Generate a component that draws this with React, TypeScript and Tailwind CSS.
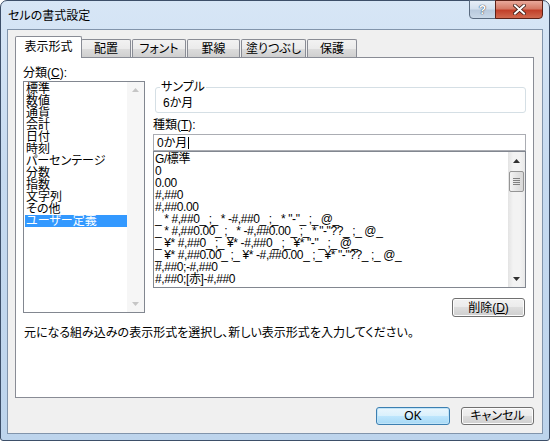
import React from "react";

const cats = [
  "標準",
  "数値",
  "通貨",
  "会計",
  "日付",
  "時刻",
  "パーセンテージ",
  "分数",
  "指数",
  "文字列",
  "その他",
  "ユーザー定義",
];

const formats = [
  "G/標準",
  "0",
  "0.00",
  "#,##0",
  "#,##0.00",
  '_ * #,##0_ ;_ * -#,##0_ ;_ * "-"_ ;_ @_ ',
  '_ * #,##0.00_ ;_ * -#,##0.00_ ;_ * "-"??_ ;_ @_ ',
  '_ ¥* #,##0_ ;_ ¥* -#,##0_ ;_ ¥* "-"_ ;_ @_ ',
  '_ ¥* #,##0.00_ ;_ ¥* -#,##0.00_ ;_ ¥* "-"??_ ;_ @_ ',
  "#,##0;-#,##0",
  "#,##0;[赤]-#,##0",
];

const tabs = [
  { label: "配置", w: "w-[50px]" },
  { label: "フォント", w: "w-[54px]" },
  { label: "罫線", w: "w-[53px]" },
  { label: "塗りつぶし", w: "w-[65px]" },
  { label: "保護", w: "w-[50px]" },
];

function Arrow({ up, color }: { up?: boolean; color: string }) {
  return (
    <svg width="7" height="4" viewBox="0 0 7 4">
      {up ? <path d="M0 4 L3.5 0 L7 4 Z" fill={color} /> : <path d="M0 0 L3.5 4 L7 0 Z" fill={color} />}
    </svg>
  );
}

function Button({ children, className = "", primary }: { children: React.ReactNode; className?: string; primary?: boolean }) {
  return (
    <div
      className={
        "flex items-center justify-center rounded-[3px] border text-[12px] leading-none " +
        (primary
          ? "border-[#3c7fb1] bg-[linear-gradient(#eaf6fd_0%,#d9f0fc_50%,#bee6fd_50%,#a7d9f5_100%)] shadow-[inset_0_0_0_1px_#c0e4f8] "
          : "border-[#707070] bg-[linear-gradient(#f2f2f2_0%,#ebebeb_50%,#dddddd_50%,#cfcfcf_100%)] shadow-[inset_0_0_0_1px_#fcfcfc] ") +
        className
      }
    >
      {children}
    </div>
  );
}

export default function App() {
  return (
    <div className="w-[550px] h-[441px] bg-white font-['Liberation_Sans','Noto_Sans_CJK_JP',sans-serif] text-black [font-feature-settings:'palt']">
      <div className="w-[550px] h-[441px] flex flex-col border border-[#3d4f69] rounded-t-[7px] rounded-b-[3px] bg-[linear-gradient(180deg,#d7e6f6_0%,#c6daf0_40%,#bdd4ec_100%)] px-[6px] pb-[6px]">
        {/* title bar */}
        <div className="h-[28px] flex items-start shrink-0">
          <div className="pl-[1px] pt-[8px] text-[12px] leading-[14px] text-black">セルの書式設定</div>
          <div className="ml-auto flex">
            <div className="w-[27px] h-[19px] -mt-px border border-[#5a6b80] rounded-bl-[4px] bg-[linear-gradient(#e6eef7_0%,#d3e0ee_45%,#b9cadd_55%,#c9d8e8_100%)] flex items-center justify-center">
              <span className="text-[12px] leading-none font-bold text-white [text-shadow:0_0_1px_#2d3c50,0_0_1px_#2d3c50]">?</span>
            </div>
            <div className="w-[48px] h-[19px] -mt-px -ml-px border border-[#5c2117] rounded-br-[4px] bg-[linear-gradient(#e9a99b_0%,#d57a66_45%,#c2402a_55%,#d0694f_100%)] flex items-center justify-center">
              <svg width="13" height="11" viewBox="0 0 13 11">
                <path d="M2 1.5 L11 9.5 M11 1.5 L2 9.5" stroke="#3a1a14" strokeWidth="3.6" strokeLinecap="square" />
                <path d="M2 1.5 L11 9.5 M11 1.5 L2 9.5" stroke="#ffffff" strokeWidth="2" strokeLinecap="square" />
              </svg>
            </div>
          </div>
        </div>

        {/* client area */}
        <div className="flex-1 border border-[#8194ab] bg-[#f0f0f0] flex flex-col pl-[7px] pt-[6px]">
          {/* tab strip */}
          <div className="flex items-end h-[21px] text-[12px]">
            <div className="relative z-10 -mb-px w-[67px] h-[22px] border border-b-0 border-[#898c95] bg-white rounded-t-[2px] flex items-center justify-center leading-none pb-[2px]">
              表示形式
            </div>
            {tabs.map((t, i) => (
              <div
                key={t.label}
                className={
                  "h-[18px] border border-b-0 border-[#898c95] rounded-t-[2px] bg-[linear-gradient(#f2f2f2_0%,#ebebeb_50%,#dddddd_50%,#cfcfcf_100%)] flex items-center justify-center leading-none " +
                  t.w +
                  (i === 0 ? " -ml-px" : " ml-px")
                }
              >
                {t.label}
              </div>
            ))}
          </div>

          {/* tab panel */}
          <div className="w-[519px] h-[341px] border border-[#898c95] bg-white pl-[7px] pt-[8px] text-[12px]">
            <div className="flex">
              {/* left column */}
              <div className="flex flex-col w-[122px]">
                <div className="leading-[14px] h-[15px]">分類(<span className="underline">C</span>):</div>
                <div className="w-[122px] h-[232px] border border-[#828790] flex">
                  <div className="flex-1 pt-[1px] pl-[1px]">
                    {cats.map((c, i) => (
                      <div
                        key={c}
                        className={
                          "h-[12px] leading-[12px] pl-[1px] whitespace-nowrap " +
                          (i === cats.length - 1 ? "bg-[#3399ff] text-white" : "")
                        }
                      >
                        {c}
                      </div>
                    ))}
                  </div>
                  <div className="w-[17px] bg-[#f6f6f6] flex flex-col justify-between items-center py-[6px]">
                    <Arrow up color="#c6c6c6" />
                    <Arrow color="#c6c6c6" />
                  </div>
                </div>
              </div>

              {/* right column */}
              <div className="flex flex-col ml-[8px] mt-[15px] w-[373px]">
                <fieldset className="ml-[2px] w-[371px] h-[32px] border border-[#d5dfe5] rounded-[3px] px-[4px]">
                  <legend className="px-[1px] leading-[13px] h-[13px]">サンプル</legend>
                  <div className="pl-[3px] leading-[14px] pt-[2px]">6か月</div>
                </fieldset>
                <div className="mt-[5px] leading-[14px] h-[15px]">種類(<span className="underline">T</span>):</div>
                <div className="mt-[1px] h-[17px] border border-[#abadb3] flex items-center pl-[3px] leading-none">
                  0か月<span className="ml-px w-px h-[12px] bg-black" />
                </div>
                <div className="h-[137px] border border-[#828790] flex">
                  <div className="flex-1 pt-[1px] pl-[1px] overflow-hidden">
                    {formats.map((f) => (
                      <div key={f} className="h-[12px] leading-[12px] whitespace-pre tracking-[-0.4px]">
                        {f}
                      </div>
                    ))}
                  </div>
                  <div className="w-[17px] bg-[linear-gradient(90deg,#e3e3e3,#f3f3f3_30%,#f3f3f3_70%,#e8e8e8)] flex flex-col items-center">
                    <div className="h-[17px] flex items-center justify-center">
                      <Arrow up color="#303030" />
                    </div>
                    <div className="mt-[2px] w-[15px] h-[21px] border border-[#959595] rounded-[2px] bg-[linear-gradient(90deg,#f3f3f3,#e4e4e4_50%,#d8d8d8)] flex flex-col items-center justify-center gap-[1px]">
                      <div className="w-[7px] h-px bg-[#808080]" />
                      <div className="w-[7px] h-px bg-[#808080]" />
                      <div className="w-[7px] h-px bg-[#808080]" />
                      <div className="w-[7px] h-px bg-[#808080]" />
                    </div>
                    <div className="mt-auto h-[17px] flex items-center justify-center">
                      <Arrow color="#303030" />
                    </div>
                  </div>
                </div>
                <div className="flex justify-end mt-[10px] pr-px">
                  <Button className="w-[73px] h-[19px]">
                    削除(<span className="underline">D</span>)
                  </Button>
                </div>
              </div>
            </div>
            <div className="mt-[10px] pl-px leading-[12px]">
              元になる組み込みの表示形式を選択し、新しい表示形式を入力してください。
            </div>
          </div>

          {/* footer */}
          <div className="flex justify-end mt-[9px] pr-[8px]">
            <Button primary className="w-[74px] h-[18px]">
              OK
            </Button>
            <Button className="w-[73px] h-[18px] ml-[11px]">キャンセル</Button>
          </div>
        </div>
      </div>
    </div>
  );
}
